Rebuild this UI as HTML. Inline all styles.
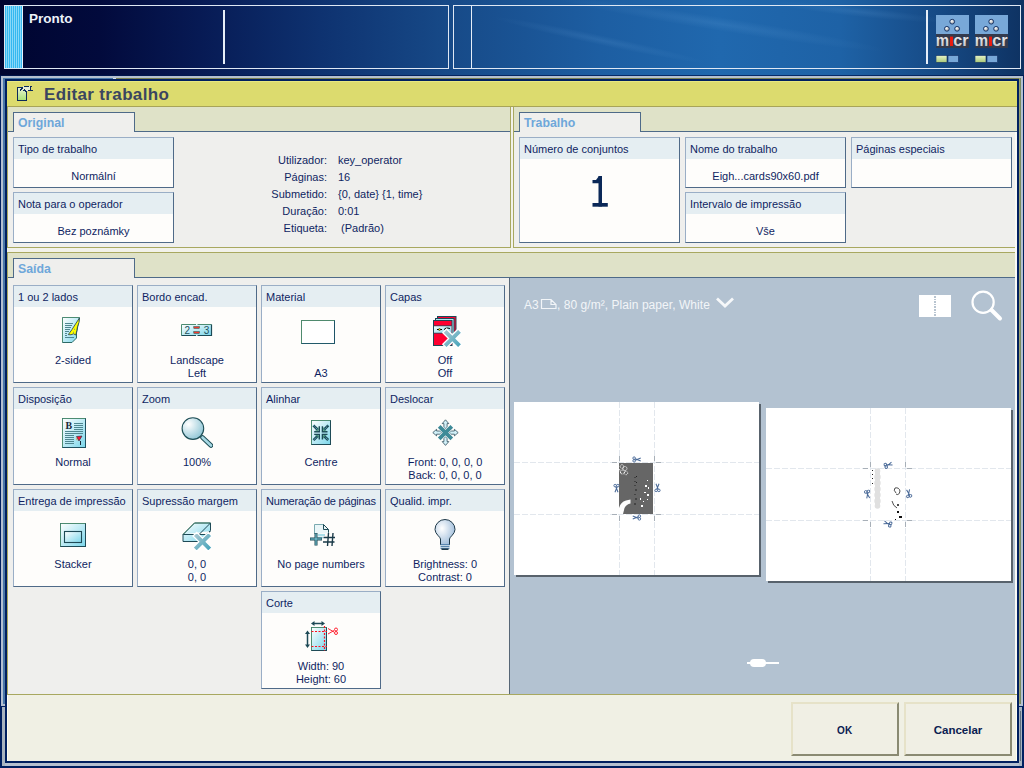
<!DOCTYPE html>
<html><head><meta charset="utf-8">
<style>
*{box-sizing:border-box;margin:0;padding:0}
html,body{width:1024px;height:768px;overflow:hidden;background:#000530}
body{position:relative;font-family:"Liberation Sans",sans-serif;font-size:11px;color:#0f1f62}
.a{position:absolute}
#top{left:0;top:0;width:1024px;height:76px;background:linear-gradient(90deg,#000530 0px,#020a3c 100px,#071a54 200px,#0e3270 320px,#174a88 450px,#1d5ea2 600px,#2068ae 720px,#1e62a6 840px,#174c88 930px,#0e3262 1024px)}
.card{position:absolute;background:#fefdfb;border:1px solid #9aaec6;border-right-color:#4f6a88;border-bottom-color:#4f6a88}
.card .h{position:absolute;left:0;top:0;right:0;height:21px;background:#e5eef2;padding:5px 0 0 4px;white-space:nowrap}
.card .v{position:absolute;left:0;right:0;text-align:center;line-height:13px;white-space:nowrap}
.card .ic{position:absolute;left:0;right:0;text-align:center}
.card .ic svg{display:inline-block}
.tab{position:absolute;background:#efefed;border:1px solid #4e6a88;border-bottom:none;height:20px;width:122px}
.tab span{position:absolute;left:4px;top:3px;font-weight:bold;font-size:12.3px;color:#6ea7da}
.lbl{position:absolute;text-align:right;white-space:nowrap;width:80px}
.val{position:absolute;white-space:nowrap}
.btn{position:absolute;width:108px;height:54px;background:#f0efe4;border:2px solid #e6e2c8;border-right-color:#8a8a72;border-bottom-color:#8a8a72;font-weight:bold;font-size:11.5px;color:#0a2050;text-align:center;line-height:52px}
.micr{position:absolute;width:33px;height:48px}
.micr:before{content:"";position:absolute;left:0;top:0;width:33px;height:19px;background:#78a8d8}
.micr:after{content:"";position:absolute;left:0;top:19px;width:33px;height:14px;background:#353a4c}
</style></head><body>
<div id="top" class="a"></div>
<svg class="a" style="left:0;top:0" width="1024" height="76"><defs><radialGradient id="st"><stop offset="0" stop-color="#9cd0ff" stop-opacity="0.1"/><stop offset="1" stop-color="#9cd0ff" stop-opacity="0"/></radialGradient></defs>
<ellipse cx="720" cy="24" rx="170" ry="7" fill="url(#st)" transform="rotate(9 720 24)"/>
<ellipse cx="600" cy="40" rx="110" ry="5" fill="url(#st)" transform="rotate(12 600 40)"/>
<ellipse cx="860" cy="12" rx="90" ry="5" fill="url(#st)" transform="rotate(6 860 12)"/>
</svg>
<!-- status box 1 -->
<div class="a" style="left:4px;top:5px;width:445px;height:64px;border:1px solid #dfe8f4;"></div>
<div class="a" style="left:5px;top:6px;width:17px;height:62px;background:repeating-linear-gradient(90deg,#35b8f0 0 1px,#8ad8f8 1px 2px)"></div>
<div class="a" style="left:22px;top:6px;width:1px;height:62px;background:#e8f2fa"></div>
<div class="a" style="left:29px;top:11px;color:#eef3fa;font-weight:bold;font-size:13.5px">Pronto</div>
<div class="a" style="left:223px;top:10px;width:2px;height:54px;background:#e6eef8"></div>
<!-- status box 2 -->
<div class="a" style="left:453px;top:5px;width:568px;height:64px;border:1px solid #dfe8f4;"></div>
<div class="a" style="left:471px;top:6px;width:1px;height:62px;background:#e6eef8"></div>
<div class="a" style="left:926px;top:10px;width:2px;height:54px;background:#e6eef8"></div>

<!-- window frame -->
<div class="a" style="left:0;top:76px;width:1024px;height:692px;background:#002060"></div>
<div class="a" style="left:1px;top:76px;width:1022px;height:690px;border:2px solid #b4c0d0;border-bottom-width:3px"></div>
<div class="a" style="left:0;top:75px;width:1024px;height:1px;background:rgba(0,24,80,0.75)"></div>
<div class="a" style="left:3px;top:78px;width:1016px;height:680px;border-left:2px solid #4a78a8;border-top:1px solid #4a78a8"></div>
<div class="a" style="left:116px;top:78px;width:905px;height:1px;background:#7a8050"></div>
<div class="a" style="left:113px;top:78px;width:3px;height:1px;background:#d8e0e8"></div>
<div class="a" style="left:1019px;top:78px;width:1px;height:626px;background:#98a070"></div><div class="a" style="left:1020px;top:78px;width:1px;height:626px;background:#7a8a60"></div>

<!-- content -->
<div class="a" style="left:7px;top:81px;width:1010px;height:680px;background:#f2f2ea"></div>
<!-- title bar -->
<div class="a" style="left:7px;top:81px;width:1010px;height:26px;background:#dcdb6e;border-bottom:1px solid #a8a458;border-top:1px solid #e8e880"></div>
<div class="a" style="left:44px;top:85px;font-weight:bold;font-size:17px;color:#3a4560;letter-spacing:0.35px">Editar trabalho</div>

<!-- Original section -->
<div class="a" style="left:7px;top:107px;width:504px;height:141px;border:1px solid #a8a860;border-top:none;background:#efefed"></div>
<div class="a" style="left:8px;top:107px;width:502px;height:25px;background:#dfe2c8;border-bottom:1px solid #4e6a88"></div>
<div class="tab" style="left:13px;top:112px"><span>Original</span></div>

<!-- Trabalho section -->
<div class="a" style="left:513px;top:107px;width:504px;height:141px;border:1px solid #a8a860;border-top:none;border-right:none;background:#efefed"></div>
<div class="a" style="left:514px;top:107px;width:503px;height:25px;background:#dfe2c8;border-bottom:1px solid #4e6a88"></div>
<div class="tab" style="left:519px;top:112px"><span>Trabalho</span></div>

<!-- Saida section -->
<div class="a" style="left:7px;top:252px;width:1010px;height:443px;border:1px solid #a8a860;border-right:none;background:#efefed"></div>
<div class="a" style="left:8px;top:253px;width:1009px;height:25px;background:#dfe2c8;border-bottom:1px solid #4e6a88"></div>
<div class="tab" style="left:13px;top:258px"><span>Saída</span></div>

<!-- preview -->
<div class="a" style="left:509px;top:278px;width:508px;height:416px;background:#b3c2d1;border-left:1px solid #566676"></div>


<div class="a" style="left:1015px;top:132px;width:2px;height:562px;background:#fafaf6"></div>
<!-- lower frame details -->
<div class="a" style="left:1px;top:704px;width:4px;height:2px;background:#b4c0d0"></div>
<div class="a" style="left:0;top:706px;width:5px;height:1px;background:#002060"></div>
<div class="a" style="left:0;top:707px;width:2px;height:61px;background:#002060"></div>
<div class="a" style="left:2px;top:707px;width:3px;height:59px;background:#a8b4c0"></div>
<div class="a" style="left:1019px;top:704px;width:4px;height:2px;background:#b4c0d0"></div>
<div class="a" style="left:1019px;top:706px;width:5px;height:1px;background:#002060"></div>
<div class="a" style="left:1019px;top:707px;width:3px;height:59px;background:#a8b4c0"></div>
<div class="a" style="left:1020px;top:711px;width:1px;height:50px;background:#607080"></div>
<div class="a" style="left:1022px;top:707px;width:2px;height:61px;background:#002060"></div>
<!-- bottom bar -->
<div class="a" style="left:7px;top:695px;width:1010px;height:66px;background:#f0f0e4"></div>
<div class="a" style="left:7px;top:695px;width:1px;height:66px;background:#fffff2"></div>
<div class="a" style="left:1016px;top:695px;width:1px;height:66px;background:#fffff2"></div>


<!-- Original cards -->
<div class="card" style="left:13px;top:137px;width:161px;height:51px"><div class="h">Tipo de trabalho</div><div class="v" style="top:32px">Normální</div></div>
<div class="card" style="left:13px;top:192px;width:161px;height:51px"><div class="h">Nota para o operador</div><div class="v" style="top:32px">Bez poznámky</div></div>
<div class="lbl" style="left:247px;top:154px">Utilizador:</div><div class="val" style="left:338px;top:154px">key_operator</div>
<div class="lbl" style="left:247px;top:171px">Páginas:</div><div class="val" style="left:338px;top:171px">16</div>
<div class="lbl" style="left:247px;top:188px">Submetido:</div><div class="val" style="left:338px;top:188px">{0, date} {1, time}</div>
<div class="lbl" style="left:247px;top:205px">Duração:</div><div class="val" style="left:338px;top:205px">0:01</div>
<div class="lbl" style="left:247px;top:222px">Etiqueta:</div><div class="val" style="left:338px;top:222px">&nbsp;(Padrão)</div>

<!-- Trabalho cards -->
<div class="card" style="left:519px;top:137px;width:161px;height:106px"><div class="h">Número de conjuntos</div>
<svg class="a" style="left:0;top:0" width="161" height="106"><g fill="#0b2858" transform="translate(-520,-138)"><rect x="598.5" y="176" width="3.5" height="30.5"/><rect x="592.5" y="203" width="15.3" height="3.7"/><path d="M592.5 180 H596 L599 176 V183.3 H592.5 Z"/></g></svg></div>
<div class="card" style="left:685px;top:137px;width:161px;height:51px"><div class="h">Nome do trabalho</div><div class="v" style="top:32px">Eigh...cards90x60.pdf</div></div>
<div class="card" style="left:685px;top:192px;width:161px;height:51px"><div class="h">Intervalo de impressão</div><div class="v" style="top:32px">Vše</div></div>
<div class="card" style="left:851px;top:137px;width:161px;height:51px"><div class="h">Páginas especiais</div></div>

<!-- Saida cards -->
<div class="card" style="left:13px;top:285px;width:120px;height:98px"><div class="h">1 ou 2 lados</div><div class="v" style="top:68px">2-sided</div><svg class="a" style="left:48px;top:31px" width="19" height="27" viewBox="0 0 19 27"><defs><linearGradient id="g1" x1="0" y1="0" x2="1" y2="1"><stop offset="0" stop-color="#ffffff"/><stop offset="1" stop-color="#7ad6ea"/></linearGradient></defs>
<path d="M0.5 0.5 H17.5 L14.5 16 V21 L10 25.5 H0.5 Z" fill="url(#g1)" stroke="#2c6a66"/>
<path d="M1 0.5 H17 M0.5 1 V25" stroke="#4d8c72" fill="none"/>
<g stroke="#4e8690" stroke-width="1"><path d="M3 6.5H11M3 8.5H10M3 10.5H9M3 12.5H8M3 14.5H7M3 16.5H5M3 18.5H5M3 20.5H12"/></g>
<path d="M17.3 1.2 L17 5.5 L15.5 9.5 L14.8 13.5 L13.8 18 L11.5 16.8 L9 17.8 L6.3 17.6 L10 12.5 L13.5 7 Z" fill="#ffff00" stroke="#1c3c50" stroke-width="0.8"/>
<path d="M12 12 L13 12.5 M11 15 L12 15.5" stroke="#4878a0" stroke-width="0.8"/>
</svg></div>
<div class="card" style="left:137px;top:285px;width:120px;height:98px"><div class="h">Bordo encad.</div><div class="v" style="top:68px">Landscape<br>Left</div><svg class="a" style="left:43px;top:38px" width="32" height="13" viewBox="0 0 32 13"><defs><linearGradient id="g2" x1="0" y1="0" x2="1" y2="1"><stop offset="0" stop-color="#ffffff"/><stop offset="1" stop-color="#7ad6ea"/></linearGradient></defs>
<rect x="0.5" y="0.5" width="30" height="11" fill="url(#g2)"/>
<path d="M0.5 11.5 V0.5 H15 M16.5 0.5 H30.5" stroke="#4d8c72" fill="none"/>
<path d="M30.5 0.5 V11.5 H16.5 M15 11.5 H0.5" stroke="#1c4a56" fill="none" stroke-width="1.2"/>
<text x="3.6" y="9.8" font-family="Liberation Sans" font-size="10" fill="#24505c">2</text>
<text x="22.8" y="9.8" font-family="Liberation Sans" font-size="10" fill="#24505c">3</text>
<rect x="12.8" y="2.6" width="5.6" height="1.8" fill="#f03a30" stroke="#1c4a40" stroke-width="0.5"/>
<rect x="12.8" y="7.6" width="5.6" height="1.8" fill="#f03a30" stroke="#1c4a40" stroke-width="0.5"/>
</svg></div>
<div class="card" style="left:261px;top:285px;width:120px;height:98px"><div class="h">Material</div><div class="v" style="top:81px">A3</div><div class="a" style="left:39px;top:34px;width:34px;height:24px;background:#fff;border:1px solid #4f8a6e;border-right-color:#1d5468;border-bottom-color:#225a6a"></div></div>
<div class="card" style="left:385px;top:285px;width:120px;height:98px"><div class="h">Capas</div><div class="v" style="top:68px">Off<br>Off</div><svg class="a" style="left:47px;top:30px" width="31" height="34" viewBox="0 0 31 34"><defs><linearGradient id="g3" x1="0" y1="0" x2="1" y2="1"><stop offset="0" stop-color="#ffffff"/><stop offset="1" stop-color="#7ad6ea"/></linearGradient></defs>
<rect x="4.5" y="0.5" width="18.5" height="25" fill="#ff0030" stroke="#1c4858"/>
<rect x="2.5" y="2.5" width="18.5" height="25" fill="#aee4f0" stroke="#1c4858"/>
<rect x="0.5" y="4.5" width="18.5" height="25" fill="#ff0030" stroke="#1c4858"/>
<rect x="1" y="10" width="17.5" height="7" fill="url(#g3)"/>
<path d="M1 9.8 H18.5 M1 17.2 H18.5" stroke="#1c4858" stroke-width="0.8"/>
<path d="M4 13.5 H9" stroke="#000" stroke-width="1"/><circle cx="6.5" cy="13.5" r="1" fill="#e8e000" stroke="#000" stroke-width="0.5"/>
<path d="M11.5 14 Q12 11.8 14.5 12 L17 12.5" stroke="#000" fill="none" stroke-width="1.2"/>
<defs><linearGradient id="xg" x1="0" y1="0" x2="1" y2="1"><stop offset="0" stop-color="#b4ccd4"/><stop offset="1" stop-color="#3aa0b8"/></linearGradient></defs><g transform="translate(19.3,22.5)"><path d="M-9.5 -5.8 L-5.8 -9.5 L0 -3.7 L5.8 -9.5 L9.5 -5.8 L3.7 0 L9.5 5.8 L5.8 9.5 L0 3.7 L-5.8 9.5 L-9.5 5.8 L-3.7 0 Z" fill="url(#xg)" stroke="#fff" stroke-width="1.3"/></g>
</svg></div>

<div class="card" style="left:13px;top:387px;width:120px;height:98px"><div class="h">Disposição</div><div class="v" style="top:68px">Normal</div><svg class="a" style="left:48px;top:30px" width="25" height="31" viewBox="0 0 25 31"><defs><linearGradient id="g4" x1="0" y1="0" x2="1" y2="1"><stop offset="0" stop-color="#ffffff"/><stop offset="1" stop-color="#7ad6ea"/></linearGradient></defs>
<rect x="0.5" y="0.5" width="23" height="29" fill="url(#g4)" stroke="#1e5060"/>
<path d="M0.5 29.5 V0.5 H23.5" stroke="#4d8c72" fill="none"/>
<text x="3.5" y="11" font-family="Liberation Serif" font-weight="bold" font-size="10" fill="#202a38">B</text>
<g stroke="#4e8690" stroke-width="1"><path d="M12 5.5H21M12 7.5H21M12 9.5H21M12 11.5H21M3 13.5H21M3 15.5H21M3 17.5H12M3 19.5H12M3 21.5H12M3 23.5H12M3 25.5H12"/></g>
<path d="M14.5 18.5 L20 18 L17 23 Z" fill="#ff1030" stroke="#1a2a3a" stroke-width="0.6"/><path d="M14.5 19 L15.5 22.5 L14.5 22" fill="#ff8000"/>
<path d="M18.5 23 V27" stroke="#1a2a3a" stroke-width="1"/>
</svg></div>
<div class="card" style="left:137px;top:387px;width:120px;height:98px"><div class="h">Zoom</div><div class="v" style="top:68px">100%</div><svg class="a" style="left:43px;top:29px" width="32" height="32" viewBox="0 0 32 32"><defs><radialGradient id="g5" cx="0.3" cy="0.3" r="0.8"><stop offset="0" stop-color="#ffffff"/><stop offset="1" stop-color="#8cc4d4"/></radialGradient></defs>
<path d="M21.5 20.5 L30 28.5" stroke="#1e4e56" stroke-width="4.6" stroke-linecap="round"/>
<path d="M21.5 20.5 L30 28.5" stroke="#a6d8e4" stroke-width="2.6" stroke-linecap="round"/>
<circle cx="11.9" cy="11.6" r="10.8" fill="url(#g5)" stroke="#1e4e56" stroke-width="1.1"/>
</svg></div>
<div class="card" style="left:261px;top:387px;width:120px;height:98px"><div class="h">Alinhar</div><div class="v" style="top:68px">Centre</div><svg class="a" style="left:49px;top:32px" width="21" height="26" viewBox="0 0 21 26"><defs><linearGradient id="g6" x1="0" y1="0" x2="1" y2="1"><stop offset="0" stop-color="#ffffff"/><stop offset="1" stop-color="#7ad6ea"/></linearGradient></defs>
<rect x="0.5" y="0.5" width="19" height="24" fill="url(#g6)" stroke="#1e4a56"/>
<path d="M0.5 24.5 V0.5 H19.5" stroke="#4d8c72" fill="none"/>
<g stroke="#1c4a58" stroke-width="2.6" stroke-linecap="butt"><path d="M2.3 5.3 L7 10"/><path d="M17.4 5.3 L12.7 10"/><path d="M2.5 20.2 L7 15.7"/><path d="M17.2 20 L12.7 15.7"/></g>
<g stroke="#6cc8d8" stroke-width="1" stroke-dasharray="1 1"><path d="M2.3 5.3 L7 10"/><path d="M17.4 5.3 L12.7 10"/><path d="M2.5 20.2 L7 15.7"/><path d="M17.2 20 L12.7 15.7"/></g>
<g stroke="#1c4a58" stroke-width="1.4" fill="none"><path d="M8.3 6.3 V11.8 H3.2"/><path d="M11.4 6.3 V11.8 H16.5"/><path d="M3.2 14.4 H8.3 V19.5"/><path d="M16.5 14.4 H11.4 V19.5"/></g>
<g stroke="#4d9a78" stroke-width="0.8" fill="none"><path d="M7.2 7.5 V10.7 H4.5"/><path d="M12.5 7.5 V10.7 H15.2"/><path d="M4.5 15.5 H7.2 V18.3"/><path d="M15.2 15.5 H12.5 V18.3"/></g>
</svg></div>
<div class="card" style="left:385px;top:387px;width:120px;height:98px"><div class="h">Deslocar</div><div class="v" style="top:68px">Front: 0, 0, 0, 0<br>Back: 0, 0, 0, 0</div><svg class="a" style="left:46px;top:31px" width="28" height="29" viewBox="0 0 28 29">
<g fill="#d2f0f8" stroke="#1a3a48" stroke-width="0.7" stroke-linejoin="miter">
<path d="M13.5 0.8 L16.8 4.6 H15.1 V9.3 H11.9 V4.6 H10.2 Z"/>
<path d="M13.5 26.4 L16.8 22.6 H15.1 V17.9 H11.9 V22.6 H10.2 Z"/>
<path d="M0.8 13.6 L4.6 10.3 V12 H9.3 V15.2 H4.6 V16.9 Z"/>
<path d="M26.2 13.6 L22.4 10.3 V12 H17.7 V15.2 H22.4 V16.9 Z"/>
</g>
<g stroke="#fff" stroke-width="5" stroke-linecap="butt"><path d="M7.6 7.7 L19.4 19.5 M19.4 7.7 L7.6 19.5"/></g>
<g stroke="#3e8a98" stroke-width="3.8" stroke-linecap="butt"><path d="M7.2 7.3 L19.8 19.9 M19.8 7.3 L7.2 19.9"/></g>
</svg></div>

<div class="card" style="left:13px;top:489px;width:120px;height:98px"><div class="h">Entrega de impressão</div><div class="v" style="top:68px">Stacker</div><svg class="a" style="left:46px;top:33px" width="27" height="25" viewBox="0 0 27 25"><defs><linearGradient id="g7" x1="0" y1="0" x2="1" y2="1"><stop offset="0" stop-color="#ffffff"/><stop offset="1" stop-color="#7ad6ea"/></linearGradient></defs>
<rect x="0.5" y="0.5" width="25" height="23" fill="url(#g7)" stroke="#1e4a56"/>
<path d="M0.5 23.5 V0.5 H25.5" stroke="#4d8c72" fill="none"/>
<rect x="4.5" y="8.5" width="17" height="11" fill="url(#g7)" stroke="#1e4a56" stroke-width="1.1"/>
</svg></div>
<div class="card" style="left:137px;top:489px;width:120px;height:98px"><div class="h">Supressão margem</div><div class="v" style="top:68px">0, 0<br>0, 0</div><svg class="a" style="left:44px;top:32px" width="32" height="32" viewBox="0 0 32 32"><defs><linearGradient id="g8" x1="0" y1="0" x2="1" y2="1"><stop offset="0" stop-color="#ffffff"/><stop offset="1" stop-color="#7ad6ea"/></linearGradient></defs>
<path d="M1 12.5 L12.5 1 H28.5 V8.5 L24 12.5 H1 V19.5 H18 L28.5 9" fill="url(#g8)" stroke="#1e4a56" stroke-width="1"/>
<path d="M1 12.5 L12.5 1 H28.5" fill="none" stroke="#4d8c72"/>
<path d="M28.5 1 L17 12.5" stroke="#1e4a56"/>
<defs><linearGradient id="xg2" x1="0" y1="0" x2="1" y2="1"><stop offset="0" stop-color="#b4ccd4"/><stop offset="1" stop-color="#3aa0b8"/></linearGradient></defs><g transform="translate(20.5,19.8)"><path d="M-9.5 -5.8 L-5.8 -9.5 L0 -3.7 L5.8 -9.5 L9.5 -5.8 L3.7 0 L9.5 5.8 L5.8 9.5 L0 3.7 L-5.8 9.5 L-9.5 5.8 L-3.7 0 Z" fill="url(#xg2)" stroke="#fff" stroke-width="1.3"/></g>
</svg></div>
<div class="card" style="left:261px;top:489px;width:120px;height:98px"><div class="h" style="letter-spacing:-0.2px">Numeração de páginas</div><div class="v" style="top:68px">No page numbers</div><svg class="a" style="left:47px;top:34px" width="26" height="25" viewBox="0 0 26 25">
<path d="M5.5 10 V0.5 H14.5 L19.5 5.5 V9" fill="#eaf6f8" stroke="#7aaab0" stroke-width="1"/>
<path d="M14.5 0.5 L19.5 5.5 V8.5 M14.5 0.5 V5.5 H19" fill="none" stroke="#1e4a56" stroke-width="1"/>
<path d="M9 11 H16 M9 13.5 H14" stroke="#8ed4e4" stroke-width="1.5"/>
<path d="M1 15 H13 M7 9 V21.5" stroke="#1e4a56" stroke-width="3"/>
<path d="M1.5 15 H12.5 M7 9.5 V21" stroke="#7cd0e0" stroke-width="1"/>
<g stroke="#1a3a48" stroke-width="1.4"><path d="M19.5 9 L18.5 22 M24 9 L23 22 M14.5 13.5 H26 M14 18 H25.5"/></g>
</svg></div>
<div class="card" style="left:385px;top:489px;width:120px;height:98px"><div class="h">Qualid. impr.</div><div class="v" style="top:68px">Brightness: 0<br>Contrast: 0</div><svg class="a" style="left:48px;top:29px" width="23" height="32" viewBox="0 0 23 32"><defs><radialGradient id="g9" cx="0.35" cy="0.35" r="0.75"><stop offset="0" stop-color="#ffffff"/><stop offset="1" stop-color="#98b8d8"/></radialGradient></defs>
<path d="M6.5 26 V20 C6.5 18 1 15 1 10.5 A10 10 0 0 1 21 10.5 C21 15 15.5 18 15.5 20 V26 Z" fill="url(#g9)" stroke="#1e3848" stroke-width="1"/>
<rect x="6.5" y="25" width="9" height="5" fill="#5a86b0"/>
<path d="M6 26.5 H16 M6 28.5 H16" stroke="#d8e8f0" stroke-width="0.8"/>
<rect x="7.5" y="29.5" width="7" height="1.5" fill="#1e3848"/>
</svg></div>

<div class="card" style="left:261px;top:591px;width:120px;height:98px"><div class="h">Corte</div><div class="v" style="top:68px">Width: 90<br>Height: 60</div><svg class="a" style="left:43px;top:29px" width="34" height="32" viewBox="0 0 34 32"><defs><linearGradient id="g10" x1="0" y1="0" x2="1" y2="1"><stop offset="0" stop-color="#ffffff"/><stop offset="1" stop-color="#7ad6ea"/></linearGradient></defs>
<rect x="6.5" y="6.5" width="15" height="23" fill="url(#g10)" stroke="#1e4a56"/>
<path d="M6.5 29.5 V6.5 H21.5" stroke="#4d8c72" fill="none"/>
<g stroke="#1e4a56" stroke-width="1.5" fill="#1e4a56"><path d="M8 2.5 H18"/><path d="M2.5 11.5 V25"/></g>
<g fill="#1e4a56"><path d="M6 2.5 L9.5 0 V5 Z"/><path d="M20 2.5 L16.5 0 V5 Z"/><path d="M2.5 9.5 L0 13 H5 Z"/><path d="M2.5 27 L0 23.5 H5 Z"/></g>
<g stroke="#ff1020" stroke-width="1.2" stroke-dasharray="2 1.5" fill="none"><path d="M6.5 10.5 H22"/><path d="M6.5 25.5 H22"/><path d="M19.5 5 V30"/></g>
<g stroke="#ff1020" stroke-width="0.9" fill="none"><path d="M23 7.5 L29 11 M23 13 L29 9.5"/><circle cx="31" cy="8.5" r="1.5"/><circle cx="31" cy="12" r="1.5"/></g>
</svg></div>

<!-- buttons -->
<div class="btn" style="left:791px;top:702px"><span style="display:inline-block;transform:scaleX(0.87)">OK</span></div>
<div class="btn" style="left:904px;top:702px">Cancelar</div>

<!-- title icon -->
<svg class="a" style="left:16px;top:85px" width="19" height="17" viewBox="16 85 19 17"><defs><linearGradient id="tg" x1="0" y1="0" x2="0" y2="1"><stop offset="0" stop-color="#eef2d8"/><stop offset="1" stop-color="#a6e070"/></linearGradient></defs>
<rect x="17" y="87" width="10" height="14" fill="url(#tg)"/>
<rect x="23" y="86" width="8" height="5" fill="#e6ecd6"/>
<g fill="#0c2a5a">
<rect x="17" y="87" width="1" height="14"/><rect x="17" y="100" width="10" height="1"/><rect x="26" y="91" width="1" height="10"/>
<rect x="17" y="87" width="6" height="1"/><rect x="24" y="86" width="5" height="1"/><rect x="30" y="86" width="2" height="1"/>
<rect x="30" y="87" width="1" height="3"/><rect x="21" y="88" width="2" height="1"/><rect x="20" y="89" width="2" height="1"/><rect x="24" y="89" width="1" height="1"/>
<rect x="20" y="90" width="1" height="1"/><rect x="23" y="90" width="3" height="1"/><rect x="28" y="90" width="5" height="1"/><rect x="25" y="91" width="1" height="1"/>
</g>
</svg>

<!-- micr icons -->
<svg class="a" style="left:936px;top:15px" width="34" height="49" viewBox="0 0 34 49">
<defs><radialGradient id="dg936" cx="0.4" cy="0.35" r="0.6"><stop offset="0" stop-color="#ffffff"/><stop offset="1" stop-color="#a0a4a8"/></radialGradient><linearGradient id="mg936" x1="0" y1="0" x2="0" y2="1"><stop offset="0" stop-color="#ffffff"/><stop offset="1" stop-color="#b8bcc0"/></linearGradient><linearGradient id="gb936" x1="0" y1="0" x2="0" y2="1"><stop offset="0" stop-color="#e8f4c8"/><stop offset="1" stop-color="#a8c878"/></linearGradient></defs>
<rect x="0" y="0" width="33" height="19" fill="#78a8d8"/>
<rect x="0" y="19" width="33" height="14" fill="#343b4e"/>
<g fill="url(#dg936)" stroke="#0c2a60" stroke-width="0.9"><circle cx="16.2" cy="6.7" r="2.4"/><circle cx="10.9" cy="13.8" r="2.4"/><circle cx="21.1" cy="13.8" r="2.4"/></g>
<text x="-0.3" y="31" font-family="Liberation Sans" font-weight="bold" font-size="17" fill="url(#mg936)" textLength="13.3" lengthAdjust="spacingAndGlyphs">m</text><rect x="14" y="21.6" width="3" height="9.4" fill="#e81c10"/><text x="17.3" y="31" font-family="Liberation Sans" font-weight="bold" font-size="17" fill="url(#mg936)" textLength="15.3" lengthAdjust="spacingAndGlyphs">cr</text>
<rect x="0" y="40.5" width="11" height="7" fill="url(#gb936)" stroke="#0c2a60" stroke-width="0.6"/>
<rect x="12" y="40.5" width="10.5" height="7" fill="#78a8d8" stroke="#0c2a60" stroke-width="0.6"/>
</svg>
<svg class="a" style="left:975px;top:15px" width="34" height="49" viewBox="0 0 34 49">
<defs><radialGradient id="dg975" cx="0.4" cy="0.35" r="0.6"><stop offset="0" stop-color="#ffffff"/><stop offset="1" stop-color="#a0a4a8"/></radialGradient><linearGradient id="mg975" x1="0" y1="0" x2="0" y2="1"><stop offset="0" stop-color="#ffffff"/><stop offset="1" stop-color="#b8bcc0"/></linearGradient><linearGradient id="gb975" x1="0" y1="0" x2="0" y2="1"><stop offset="0" stop-color="#e8f4c8"/><stop offset="1" stop-color="#a8c878"/></linearGradient></defs>
<rect x="0" y="0" width="33" height="19" fill="#78a8d8"/>
<rect x="0" y="19" width="33" height="14" fill="#343b4e"/>
<g fill="url(#dg975)" stroke="#0c2a60" stroke-width="0.9"><circle cx="16.2" cy="6.7" r="2.4"/><circle cx="10.9" cy="13.8" r="2.4"/><circle cx="21.1" cy="13.8" r="2.4"/></g>
<text x="-0.3" y="31" font-family="Liberation Sans" font-weight="bold" font-size="17" fill="url(#mg975)" textLength="13.3" lengthAdjust="spacingAndGlyphs">m</text><rect x="14" y="21.6" width="3" height="9.4" fill="#e81c10"/><text x="17.3" y="31" font-family="Liberation Sans" font-weight="bold" font-size="17" fill="url(#mg975)" textLength="15.3" lengthAdjust="spacingAndGlyphs">cr</text>
<rect x="0" y="40.5" width="11" height="7" fill="url(#gb975)" stroke="#0c2a60" stroke-width="0.6"/>
<rect x="12" y="40.5" width="10.5" height="7" fill="#78a8d8" stroke="#0c2a60" stroke-width="0.6"/>
</svg>

<!-- preview header -->
<div class="a" style="left:524px;top:297.5px;color:#f2f5f8;font-size:12px;white-space:nowrap">A3</div>
<div class="a" style="left:557px;top:297.5px;color:#f2f5f8;font-size:12px;white-space:nowrap;letter-spacing:0.05px">, 80 g/m², Plain paper, White</div>
<svg class="a" style="left:540px;top:298px" width="18" height="12" viewBox="0 0 18 12"><path d="M1.5 1.5 H11 L16 6.5 V10.5 H1.5 Z M11 1.5 V6.5 H16" fill="none" stroke="#f2f5f8" stroke-width="1.2"/></svg>
<svg class="a" style="left:714px;top:295px" width="22" height="14" viewBox="0 0 22 14"><path d="M3 3.5 L11 11 L19 3.5" fill="none" stroke="#f6f8fa" stroke-width="2.8"/></svg>
<div class="a" style="left:919px;top:295px;width:32px;height:22px;background:#fff"></div>
<div class="a" style="left:934px;top:296px;width:2px;height:20px;background:repeating-linear-gradient(180deg,#b8c4d0 0 1.5px,#fff 1.5px 2.6px)"></div>
<svg class="a" style="left:968px;top:288px" width="38" height="38" viewBox="0 0 38 38"><circle cx="15.1" cy="14.2" r="10.6" fill="none" stroke="#fff" stroke-width="2.2"/><path d="M23.5 22 L32 30.5" stroke="#fff" stroke-width="4" stroke-linecap="round"/></svg>

<!-- pages -->
<div class="a" style="left:516px;top:404px;width:245px;height:173px;background:#58626c"></div>
<div class="a" style="left:514px;top:402px;width:245px;height:173px;background:#fff"></div>
<div class="a" style="left:768px;top:410px;width:245px;height:173px;background:#58626c"></div>
<div class="a" style="left:766px;top:408px;width:245px;height:173px;background:#fff"></div>
<svg class="a" style="left:514px;top:402px" width="245" height="173">
<g stroke="#e2e7ed" stroke-width="1" stroke-dasharray="6 2"><path d="M105.5 0 V174 M140.5 0 V174 M0 60.5 H246 M0 112.5 H246"/></g>
<g stroke="#a8b0b8" stroke-width="1"><path d="M98 60.5 H103 M142 60.5 H147 M98 112.5 H103 M142 112.5 H147 M105.5 54 V59 M140.5 54 V59 M105.5 114 V119 M140.5 114 V119"/></g>
<rect x="105" y="61" width="34" height="51" fill="#666"/>
<path d="M105 112 V106 Q106.5 100 112 98.5 L116.5 97.5 V101.5 Q112.5 102 110.5 106 L109 112 Z" fill="#fff"/>
<g fill="none" stroke="#fff" stroke-width="0.9" stroke-dasharray="1 0.6"><circle cx="108" cy="64.5" r="1.8"/><circle cx="111" cy="66.5" r="2"/><circle cx="108.5" cy="70" r="2"/><circle cx="112" cy="71" r="1.7"/><path d="M105.5 67 L107 72"/></g>
<g fill="#222"><rect x="120.5" y="75" width="1" height="1"/><rect x="120.5" y="79" width="1" height="1"/><rect x="120.5" y="83" width="1" height="1"/><rect x="121.5" y="87" width="1" height="2"/><rect x="120.5" y="92" width="1" height="1"/><rect x="121.5" y="96" width="1" height="2"/><rect x="120.5" y="101" width="1" height="2"/><rect x="122" y="74" width="1" height="1"/><rect x="122" y="80" width="1" height="1"/></g>
<g fill="#fff"><rect x="133" y="78" width="1" height="1"/><rect x="131" y="83" width="2" height="2"/><rect x="134" y="85" width="1" height="2"/><rect x="130" y="90" width="2" height="1"/><rect x="133" y="92" width="2" height="2"/><rect x="126" y="96" width="1" height="2"/><rect x="129" y="99" width="1" height="1"/><rect x="127" y="103" width="2" height="2"/><rect x="133" y="97" width="1" height="1"/></g>
<g transform="translate(122.5,57.5) rotate(0) scale(0.85)"><g stroke="#4a6a98" fill="none"><circle cx="-2.8" cy="-1.6" r="1.5" stroke-width="1.1"/><circle cx="-2.8" cy="1.6" r="1.5" stroke-width="1.1"/><path d="M-1.5 -0.8 L5 1.8 M-1.5 0.8 L5 -1.8" stroke-width="1.2"/></g></g><g transform="translate(123,115.5) rotate(180) scale(0.85)"><g stroke="#4a6a98" fill="none"><circle cx="-2.8" cy="-1.6" r="1.5" stroke-width="1.1"/><circle cx="-2.8" cy="1.6" r="1.5" stroke-width="1.1"/><path d="M-1.5 -0.8 L5 1.8 M-1.5 0.8 L5 -1.8" stroke-width="1.2"/></g></g><g transform="translate(102.5,86) rotate(90) scale(0.85)"><g stroke="#4a6a98" fill="none"><circle cx="-2.8" cy="-1.6" r="1.5" stroke-width="1.1"/><circle cx="-2.8" cy="1.6" r="1.5" stroke-width="1.1"/><path d="M-1.5 -0.8 L5 1.8 M-1.5 0.8 L5 -1.8" stroke-width="1.2"/></g></g><g transform="translate(143.5,86) rotate(-90) scale(0.85)"><g stroke="#4a6a98" fill="none"><circle cx="-2.8" cy="-1.6" r="1.5" stroke-width="1.1"/><circle cx="-2.8" cy="1.6" r="1.5" stroke-width="1.1"/><path d="M-1.5 -0.8 L5 1.8 M-1.5 0.8 L5 -1.8" stroke-width="1.2"/></g></g>
</svg>
<svg class="a" style="left:766px;top:408px" width="245" height="173">
<g stroke="#e2e7ed" stroke-width="1" stroke-dasharray="6 2"><path d="M104.5 0 V174 M139.5 0 V174 M0 60.5 H245 M0 112.5 H245"/></g>
<g stroke="#a8b0b8" stroke-width="1"><path d="M97 60.5 H102 M141 60.5 H146 M97 112.5 H102 M141 112.5 H146 M104.5 54 V59 M139.5 54 V59 M104.5 114 V119 M139.5 114 V119"/></g>
<g fill="#e0e0e0"><rect x="109" y="61" width="5" height="38"/><circle cx="111.5" cy="63" r="2.8"/><circle cx="111.5" cy="69" r="3.2"/><circle cx="111.5" cy="75" r="3.2"/><circle cx="111.5" cy="81" r="3.2"/><circle cx="111.5" cy="87" r="3.2"/><circle cx="111.5" cy="93" r="3.2"/><circle cx="111.5" cy="98" r="2.8"/></g>
<g fill="#222"><rect x="106" y="62" width="1" height="1"/><rect x="106" y="66" width="1" height="1"/><rect x="106" y="70" width="1" height="1"/><rect x="106" y="75" width="1" height="1"/></g>
<g stroke="#222" stroke-width="0.8" fill="none"><path d="M130 85 Q127 82 129 80 Q133 79 134 83 Q133 88 130 86 M126 93 Q127 98 131 100"/></g>
<g fill="#111"><rect x="131" y="103" width="2" height="2"/><rect x="133" y="108" width="3" height="2"/><rect x="129" y="111" width="1" height="1"/><circle cx="132" cy="97" r="1"/></g>
<g transform="translate(122,57) rotate(-20) scale(0.85)"><g stroke="#4a6a98" fill="none"><circle cx="-2.8" cy="-1.6" r="1.5" stroke-width="1.1"/><circle cx="-2.8" cy="1.6" r="1.5" stroke-width="1.1"/><path d="M-1.5 -0.8 L5 1.8 M-1.5 0.8 L5 -1.8" stroke-width="1.2"/></g></g><g transform="translate(122,115.7) rotate(200) scale(0.85)"><g stroke="#4a6a98" fill="none"><circle cx="-2.8" cy="-1.6" r="1.5" stroke-width="1.1"/><circle cx="-2.8" cy="1.6" r="1.5" stroke-width="1.1"/><path d="M-1.5 -0.8 L5 1.8 M-1.5 0.8 L5 -1.8" stroke-width="1.2"/></g></g><g transform="translate(101.5,86) rotate(80) scale(0.85)"><g stroke="#4a6a98" fill="none"><circle cx="-2.8" cy="-1.6" r="1.5" stroke-width="1.1"/><circle cx="-2.8" cy="1.6" r="1.5" stroke-width="1.1"/><path d="M-1.5 -0.8 L5 1.8 M-1.5 0.8 L5 -1.8" stroke-width="1.2"/></g></g><g transform="translate(142.8,85.8) rotate(-100) scale(0.85)"><g stroke="#4a6a98" fill="none"><circle cx="-2.8" cy="-1.6" r="1.5" stroke-width="1.1"/><circle cx="-2.8" cy="1.6" r="1.5" stroke-width="1.1"/><path d="M-1.5 -0.8 L5 1.8 M-1.5 0.8 L5 -1.8" stroke-width="1.2"/></g></g>
</svg>

<!-- slider -->
<div class="a" style="left:747px;top:662px;width:32px;height:2px;background:#fff"></div>
<div class="a" style="left:750px;top:659px;width:16px;height:8px;background:#fff;border-radius:4px"></div>
</body></html>
